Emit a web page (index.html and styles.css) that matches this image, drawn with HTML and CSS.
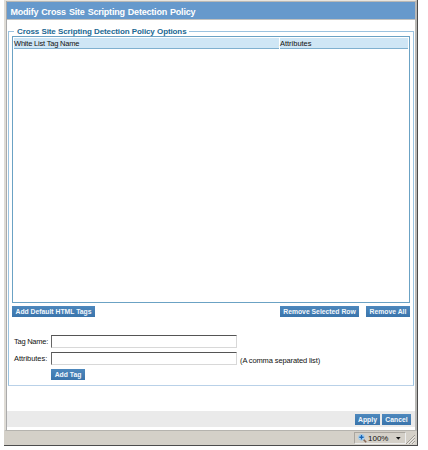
FILE: index.html
```html
<!DOCTYPE html>
<html lang="en">
<head>
<meta charset="utf-8">
<title>Modify Cross Site Scripting Detection Policy</title>
<link rel="stylesheet" href="styles.css">
</head>
<body>
<div class="window">
  <div class="page">
    <h1 class="title"><span>Modify Cross Site Scripting Detection Policy</span></h1>
    <section class="options">
      <h2 class="legend"><span>Cross Site Scripting Detection Policy Options</span></h2>
      <div class="table">
        <div class="thead">
          <div class="th"><span class="th-name">White List Tag Name</span></div>
          <div class="th"><span class="th-attr">Attributes</span></div>
        </div>
      </div>
      <div class="actions">
        <button class="btn btn-default">Add Default HTML Tags</button>
        <button class="btn btn-selected">Remove Selected Row</button>
        <button class="btn btn-all">Remove All</button>
      </div>
      <form class="form">
        <label for="tag"><span class="lb-tag">Tag Name:</span></label>
        <input id="tag" type="text">
        <span></span>
        <label for="attr"><span class="lb-attr">Attributes:</span></label>
        <input id="attr" type="text">
        <span class="hint">(A comma separated list)</span>
      </form>
      <button class="btn btn-add" type="button">Add Tag</button>
    </section>
    <footer class="footer">
      <button class="btn btn-apply">Apply</button>
      <button class="btn btn-cancel">Cancel</button>
    </footer>
  </div>
  <div class="status">
    <div class="zoom">
      <svg class="lens" width="9" height="9" viewBox="0 0 9 9">
        <path d="M5 5L8.2 8.2" stroke="#8a6a58" stroke-width="1.6"/>
        <circle cx="3.5" cy="3.3" r="2.9" fill="#c9e6fb" stroke="#8fc0e6" stroke-width=".8"/>
        <path d="M1.3 3.3h4.4M3.5 1.1v4.4" stroke="#1765b5" stroke-width="1.5"/>
      </svg>
      <span class="percent">100%</span>
      <svg class="arrow" width="5" height="3" viewBox="0 0 5 3"><path d="M0 0h4.6L2.3 2.8z" fill="#111"/></svg>
    </div>
    <svg class="grip" width="9" height="9" viewBox="0 0 9 9">
      <path d="M0 9L9 0M3 9L9 3M6 9L9 6" stroke="#a09c94" stroke-width="1"/>
      <path d="M1.3 9L9 1.3M4.3 9L9 4.3M7.3 9L9 7.3" stroke="#fff" stroke-width=".7"/>
    </svg>
  </div>
</div>
</body>
</html>
```
FILE: styles.css
```css
* { box-sizing: border-box; }
body {
  margin: 0;
  background: #fff;
  font-family: "Liberation Sans", Arial, sans-serif;
  color: #111;
}
.window {
  width: 414px;
  height: 446px;
  margin-left: 4px;
  background: #d4d0c8;
  border-right: 1px solid #4c4c4c;
  border-bottom: 1px solid #4c4c4c;
  display: flex;
  flex-direction: column;
}
.page {
  height: 431px;
  border-left: 2px solid #dfdcd6;
  border-right: 2px solid #b9b8b5;
  border-bottom: 1px solid #b5b3ae;
  border-top: 1px solid #e9e5de;
  background: #fff;
  box-shadow: inset 1px 0 #aaa;
  padding-left: 1px;
}
.title {
  height: 19px;
  margin: 0;
  padding-left: 3.5px;
  border-top: 1px solid #b9b8b5;
  border-bottom: 1px solid #c2c2c0;
  background: #6699cc;
  color: #fff;
  font-size: 9px;
  line-height: 20px;
  white-space: nowrap;
}
.title span { letter-spacing: -.21px; word-spacing: .8px; }
.options {
  width: 406px;
  height: 355px;
  margin: 11px 0 0 1px;
  padding: 0 3px;
  border: 1px solid #9bc3e0;
  border-bottom: 1px solid #b9d1e8;
}
.legend {
  width: max-content;
  height: 9px;
  margin: -5px 0 0 2px;
  padding: 0 3px;
  background: #fff;
  color: #216892;
  font-size: 8px;
  line-height: 10px;
  letter-spacing: -.12px;
  word-spacing: .3px;
  white-space: nowrap;
}
.table {
  height: 267px;
  border: 1px solid #6ba2c4;
  padding: 1px;
}
.thead {
  display: grid;
  grid-template-columns: 265px 1fr;
  gap: 1px;
}
.th {
  height: 11px;
  background: #cfe6f5;
  border-bottom: 1px solid #7fb0cf;
  font-size: 7.5px;
  line-height: 11px;
  white-space: nowrap;
}
.th-name { letter-spacing: -.2px; }
.th-attr { letter-spacing: -.02px; }
.actions {
  display: flex;
  margin-top: 3px;
}
.btn {
  display: block;
  height: 11px;
  padding: 0;
  border: 0;
  background: linear-gradient(#4d88bd, #3a74ab);
  color: #f2f7fc;
  font: bold 6.8px/11px "Liberation Sans", Arial, sans-serif;
  text-align: center;
  white-space: nowrap;
}
.btn-default { width: 83px; }
.btn-selected { width: 79px; margin-left: auto; }
.btn-all { width: 44px; margin-left: 7px; }
.form {
  display: grid;
  grid-template-columns: 37px 186px auto;
  grid-template-rows: 13px 13px;
  row-gap: 4px;
  column-gap: 2px;
  margin-top: 18px;
  font-size: 7.5px;
  line-height: 14px;
  white-space: nowrap;
}
.form label { padding-left: 2px; }
.lb-tag { letter-spacing: -.25px; }
.lb-attr { letter-spacing: -.05px; }
.form input {
  width: 186px;
  height: 13px;
  padding: 0 2px;
  border: 1px solid #d8d8d8;
  border-top-color: #555;
  border-left-color: #666;
  background: #fff;
  font: inherit;
}
.hint { padding-left: 1px; line-height: 17px; letter-spacing: -.12px; }
.btn-add { width: 34px; margin: 4px 0 0 39px; }
.footer {
  display: flex;
  justify-content: flex-end;
  gap: 2px;
  height: 16px;
  margin-top: 25px;
  padding: 3px 4px 0 0;
  background: #eaeaea;
}
.btn-apply { width: 25px; }
.btn-cancel { width: 29px; }
.status {
  display: flex;
  justify-content: flex-end;
  flex: 1;
}
.zoom {
  display: flex;
  align-items: center;
  width: 52px;
  height: 12px;
  margin: 1px 0 0;
  padding-left: 3px;
  border: 1px solid #aaa69f;
  border-right-color: #eee;
  border-bottom-color: #eee;
}
.percent { width: 22px; margin-left: 1px; font-size: 8px; line-height: 11px; }
.arrow { margin-left: 6px; }
.grip { margin: 4px 2px 0 0; }
```
